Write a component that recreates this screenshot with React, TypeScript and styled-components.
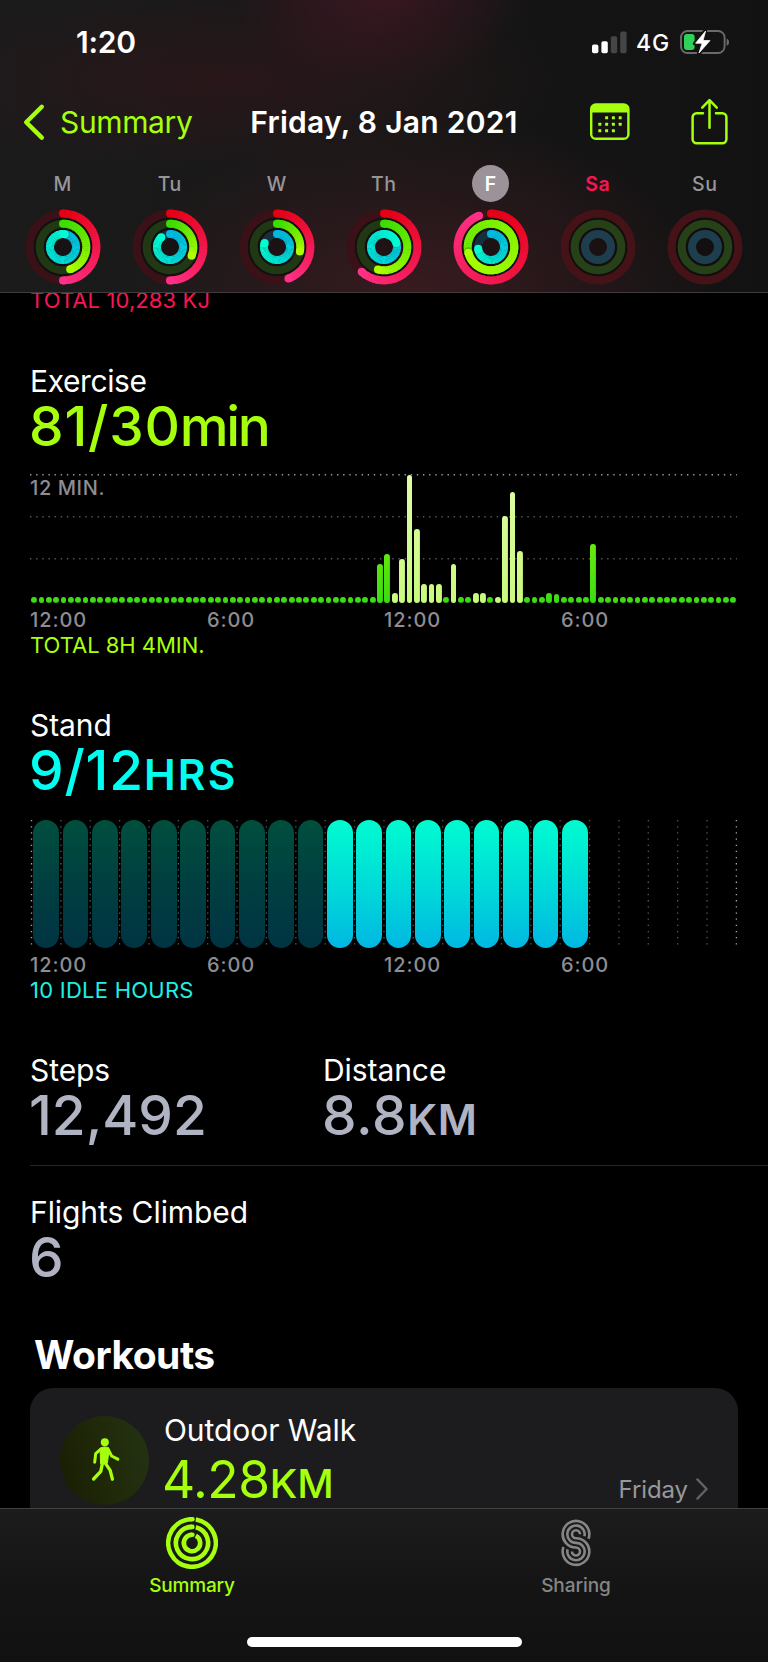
import React from "react";
import styled, { createGlobalStyle } from "styled-components";

const GlobalStyle = createGlobalStyle`
  *, *::before, *::after { box-sizing: border-box; }
  body {
    margin: 0;
    background: #000;
    font-family: Inter, "Liberation Sans", sans-serif;
    color: #fff;
  }
`;

const LIME = "#a6ff0d";
const AQUA = "#00fff0";
const SILVER = "#b0b3c2";
const PINK = "#fa1455";

/* ---------- shell ---------- */

const Screen = styled.div`
  width: 768px;
  height: 1662px;
  display: flex;
  flex-direction: column;
  overflow: hidden;
  background: #000;
`;

const Header = styled.header`
  flex: none;
  height: 293px;
  border-bottom: 1px solid #413b3d;
  background:
    radial-gradient(ellipse 150px 110px at 380px -20px, rgba(70, 22, 37, 0.8), transparent),
    radial-gradient(ellipse 300px 170px at 420px 290px, rgba(66, 28, 34, 0.75), transparent),
    radial-gradient(ellipse 330px 90px at 230px 80px, rgba(50, 22, 27, 0.65), transparent),
    linear-gradient(90deg, #1b1b1b, #171616 55%, #121212);
`;

const StatusBar = styled.div`
  height: 84px;
  display: flex;
  align-items: center;
  padding: 0 38px 0 76px;
`;

const Clock = styled.div`
  font-size: 30px;
  font-weight: 600;
  letter-spacing: -0.2px;
  margin-right: auto;
`;

const Network = styled.div`
  font-size: 23px;
  font-weight: 500;
  letter-spacing: 0.8px;
  margin: 2px 10px 0 9px;
`;

const NavBar = styled.nav`
  height: 76px;
  display: grid;
  grid-template-columns: 1fr auto 1fr;
  align-items: center;
  padding: 0 40px 0 22px;
`;

const BackLink = styled.div`
  display: flex;
  align-items: center;
  gap: 14px;
  color: ${LIME};
  font-size: 30px;
  letter-spacing: -0.36px;
`;

const Title = styled.h1`
  margin: 0 0 0 18px;
  font-size: 30px;
  line-height: 36px;
  font-weight: 600;
  letter-spacing: 0.27px;
`;

const NavActions = styled.div`
  display: flex;
  align-items: center;
  justify-content: flex-end;
  gap: 61px;
`;

const Week = styled.div`
  display: grid;
  grid-template-columns: repeat(7, 107px);
  padding-left: 9px;
`;

const Day = styled.div`
  display: flex;
  flex-direction: column;
  align-items: center;
`;

const DayName = styled.div<{ $tone?: "selected" | "today" }>`
  width: 37px;
  height: 37px;
  margin: 5px 0 5px;
  border-radius: 50%;
  display: flex;
  align-items: center;
  justify-content: center;
  font-size: 19.5px;
  font-weight: ${(p) => (p.$tone ? 600 : 500)};
  letter-spacing: 0.6px;
  text-indent: 0.6px;
  color: ${(p) => (p.$tone === "selected" ? "#fff" : p.$tone === "today" ? PINK : "#97959a")};
  background: ${(p) => (p.$tone === "selected" ? "#9b9399" : "transparent")};
`;

/* ---------- content ---------- */

const Content = styled.main`
  flex: 1;
  min-height: 0;
  overflow: hidden;
  padding-left: 30px;
`;

const Section = styled.section<{ $gap?: number }>`
  margin-top: ${(p) => p.$gap ?? 50}px;
`;

const Label = styled.div<{ $tracking?: number }>`
  height: 36px;
  line-height: 36px;
  font-size: 30px;
  letter-spacing: ${(p) => p.$tracking ?? -0.07}px;
`;

const Value = styled.div<{ $color: string; $tracking?: number }>`
  height: 54px;
  line-height: 54px;
  margin-left: -1px;
  font-size: 55px;
  font-weight: 500;
  letter-spacing: ${(p) => p.$tracking ?? 0.8}px;
  color: ${(p) => p.$color};
  white-space: nowrap;
`;

const SmallCapsUnit = styled.span<{ $tracking: number }>`
  font-size: 42.5px;
  font-weight: 600;
  letter-spacing: ${(p) => p.$tracking}px;
`;

const PlainUnit = styled.span`
  margin-left: -1px;
  letter-spacing: -2.4px;
`;

const Footnote = styled.div<{ $color: string; $tracking?: number }>`
  height: 24px;
  line-height: 24px;
  margin-top: 1px;
  font-size: 22px;
  letter-spacing: ${(p) => p.$tracking ?? 0.1}px;
  color: ${(p) => p.$color};
`;

const ClippedTotal = styled(Footnote)`
  margin-top: -5px;
`;

const Axis = styled.div`
  display: grid;
  grid-template-columns: repeat(4, 177px);
  height: 24px;
  margin-top: 5px;
  line-height: 24px;
  font-size: 20px;
  font-weight: 500;
  letter-spacing: 0.9px;
  color: #8e8d92;
`;

const MinuteChart = styled.div`
  position: relative;
  width: 706px;
  height: 129px;
  margin-top: 21px;
`;

const Grid = styled.svg`
  position: absolute;
  inset: 0;
  display: block;
  overflow: visible;
`;

const ScaleLabel = styled.div`
  position: absolute;
  top: 2px;
  left: 0;
  line-height: 24px;
  font-size: 20px;
  font-weight: 500;
  letter-spacing: 0.6px;
  color: #8e8d92;
`;

const Minutes = styled.div`
  position: relative;
  height: 100%;
  display: grid;
  grid-template-columns: repeat(96, 7.365px);
  align-items: end;
  justify-items: center;
  padding-left: 0.4px;
`;

const Minute = styled.div<{ $h: number; $workout: boolean }>`
  width: 5.8px;
  height: ${(p) => p.$h}px;
  border-radius: 2.9px;
  background: ${(p) =>
    p.$workout
      ? "linear-gradient(to top, #c8fa7c, #dffca8) bottom / 100% 128px"
      : "linear-gradient(to top, #38dc14, #a4f800) bottom / 100% 128px"};
`;

const HourChart = styled.div`
  position: relative;
  width: 708px;
  height: 128px;
  margin-top: 23px;
`;

const Hours = styled.div`
  position: relative;
  height: 100%;
  display: grid;
  grid-template-columns: repeat(24, 25.7px);
  column-gap: 3.68px;
  padding-left: 3.4px;
`;

const Hour = styled.div<{ $stood: boolean }>`
  border-radius: 13px;
  background: ${(p) =>
    p.$stood
      ? "linear-gradient(#00fcd0, #00dcd8 50%, #00b8e2)"
      : "linear-gradient(#004f3e, #003f40 50%, #003443)"};
`;

const StatsRow = styled.div`
  display: grid;
  grid-template-columns: 293px 1fr;
  padding-bottom: 23px;
  border-bottom: 1px solid #262628;
`;

const Heading = styled.h2`
  height: 46px;
  line-height: 46px;
  margin: 48px 0 10px 4px;
  font-size: 39px;
  font-weight: 700;
  letter-spacing: -0.5px;
`;

const WorkoutCard = styled.article`
  display: flex;
  width: 708px;
  height: 160px;
  padding: 24px 30px;
  border-radius: 23px;
  background: #1c1c1e;
`;

const WorkoutBadge = styled.div`
  flex: none;
  width: 89px;
  height: 89px;
  margin: 4px 15px 0 0;
  border-radius: 50%;
  background: linear-gradient(75deg, #191d02, #20290a 50%, #243414);
`;

const WorkoutText = styled.div`
  flex: 1;
`;

const WorkoutDistance = styled.div`
  height: 62px;
  line-height: 62px;
  margin-left: -2px;
  font-size: 51.5px;
  letter-spacing: -0.5px;
  color: ${LIME};
`;

const WorkoutUnit = styled.span`
  font-size: 40px;
  font-weight: 500;
  letter-spacing: 0.2px;
`;

const WorkoutDay = styled.div`
  display: flex;
  align-items: center;
  gap: 8px;
  height: 30px;
  margin-top: 62px;
  font-size: 24px;
  letter-spacing: -0.1px;
  color: #98979d;
`;

/* ---------- tab bar ---------- */

const TabBar = styled.footer`
  flex: none;
  height: 154px;
  border-top: 1px solid #414143;
  background: linear-gradient(#1c1c1c, #141414 55%, #111);
`;

const Tabs = styled.div`
  display: grid;
  grid-template-columns: 1fr 1fr;
  height: 128px;
`;

const Tab = styled.div<{ $active?: boolean }>`
  display: flex;
  flex-direction: column;
  align-items: center;
  padding-top: 8px;
  line-height: 22px;
  font-size: 19px;
  font-weight: 500;
  letter-spacing: ${(p) => (p.$active ? "-0.2px" : "-0.05px")};
  color: ${(p) => (p.$active ? LIME : "#868686")};
  svg { margin-bottom: 6px; }
`;

const HomeIndicator = styled.div`
  width: 275px;
  height: 10px;
  margin: 0 auto;
  border-radius: 5px;
  background: #fff;
`;

/* ---------- drawings ---------- */

const SignalIcon = () => (
  <svg width="35" height="23" viewBox="0 0 35 23">
    <rect x="0" y="13.6" width="6.4" height="8.6" rx="1.8" fill="#fff" />
    <rect x="9.4" y="10.3" width="6.4" height="11.9" rx="1.8" fill="#fff" />
    <rect x="18.8" y="5.3" width="6.4" height="16.9" rx="1.8" fill="#454545" />
    <rect x="28.2" y="0.4" width="6.4" height="21.8" rx="1.8" fill="#454545" />
  </svg>
);

const BatteryIcon = () => (
  <svg width="50" height="26" viewBox="0 0 50 26">
    <rect x="1" y="2" width="43.6" height="22" rx="6.5" fill="none" stroke="#6a6a6a" strokeWidth="1.9" />
    <path d="M46.6 9.6c1.7.7 2.4 2 2.4 3.6s-.7 2.9-2.4 3.6z" fill="#6a6a6a" />
    <rect x="4" y="5" width="10.6" height="16" rx="3" fill="#30d158" />
    <path d="M25.6 1 14.6 14.6h7L18.3 25.4 31 11.2h-7.4z" fill="#fff" stroke="#131313" strokeWidth="3.4" strokeLinejoin="round" />
    <path d="M25.6 2 15.6 14.2h6.6L19 24 30 11.6h-7z" fill="#fff" stroke="#fff" strokeWidth="0.8" strokeLinejoin="round" />
  </svg>
);

const BackIcon = () => (
  <svg width="24" height="38" viewBox="0 0 24 38">
    <path d="M19.8 3.8 4.2 19.2l15.6 15.4" fill="none" stroke={LIME} strokeWidth="4.4" strokeLinecap="round" strokeLinejoin="round" />
  </svg>
);

const CALENDAR_DOTS = [[1, 0], [2, 0], [3, 0], [0, 1], [1, 1], [2, 1], [3, 1], [0, 2], [1, 2], [2, 2]];

const CalendarIcon = () => (
  <svg width="40" height="38" viewBox="0 0 40 38">
    <rect x="1.2" y="1.4" width="37.2" height="34.4" rx="4.6" fill="none" stroke={LIME} strokeWidth="2.4" />
    <path d="M1 9.4V5.6A4.6 4.6 0 0 1 5.6 1H34a4.6 4.6 0 0 1 4.6 4.6v3.8z" fill={LIME} />
    {CALENDAR_DOTS.map(([c, r]) => (
      <rect key={`${c}${r}`} x={8.3 + c * 6.8} y={13.3 + r * 6.5} width="3" height="3" rx="0.5" fill={LIME} />
    ))}
  </svg>
);

const ShareIcon = () => (
  <svg width="37" height="48" viewBox="0 0 37 48">
    <g fill="none" stroke={LIME} strokeWidth="2.5" strokeLinecap="round" strokeLinejoin="round">
      <path d="M12 15.3H5.6a4 4 0 0 0-4 4v21.9a4 4 0 0 0 4 4h25.8a4 4 0 0 0 4-4V19.3a4 4 0 0 0-4-4H25" />
      <path d="M18.5 29.8V2.6M11.2 9.6l7.3-7.4 7.3 7.4" />
    </g>
  </svg>
);

type Rgb = [number, number, number];
const RING_SPECS: { r: number; from: Rgb; to: Rgb; track: string; idle: string }[] = [
  { r: 33.4, from: [228, 0, 20], to: [255, 48, 135], track: "#3a1117", idle: "#451217" },
  { r: 23.3, from: [60, 222, 0], to: [172, 255, 0], track: "#203813", idle: "#264018" },
  { r: 13, from: [0, 184, 224], to: [0, 255, 208], track: "#14303f", idle: "#1e3e4e" },
];

const mix = (a: Rgb, b: Rgb, t: number) =>
  `rgb(${a.map((v, i) => Math.round(v + (b[i] - v) * t)).join(",")})`;

const polar = (r: number, deg: number) => {
  const a = ((deg - 90) * Math.PI) / 180;
  return [40 + r * Math.cos(a), 40 + r * Math.sin(a)];
};

const RingArc = ({ r, from, to, sweep }: { r: number; from: Rgb; to: Rgb; sweep: number }) => {
  const steps = Math.ceil(sweep / 5);
  const [sx, sy] = polar(r, 0);
  const [ex, ey] = polar(r, sweep);
  const [hx, hy] = polar(r, sweep + 3);
  return (
    <g>
      <circle cx={sx} cy={sy} r="4" fill={mix(from, to, 0)} />
      {Array.from({ length: steps }, (_, i) => {
        const a = (sweep * i) / steps;
        const b = Math.min(sweep, (sweep * (i + 1)) / steps + 1);
        const [x1, y1] = polar(r, a);
        const [x2, y2] = polar(r, b);
        return (
          <path key={i} d={`M${x1} ${y1}A${r} ${r} 0 0 1 ${x2} ${y2}`} fill="none" stroke={mix(from, to, i / steps)} strokeWidth="8" />
        );
      })}
      {sweep > 360 && <circle cx={hx} cy={hy} r="4" fill="rgba(0,0,0,0.25)" />}
      <circle cx={ex} cy={ey} r="4" fill={mix(from, to, 1)} />
    </g>
  );
};

const Rings = ({ sweeps }: { sweeps?: number[] }) => (
  <svg width="80" height="80" viewBox="0 0 80 80">
    <circle cx="40" cy="40" r="23" fill="none" stroke="#110c0e" strokeOpacity="0.8" strokeWidth="12.6" />
    <circle cx="40" cy="40" r="17.5" fill="#110c0e" fillOpacity="0.5" />
    {RING_SPECS.map((s, i) => (
      <g key={s.r}>
        <circle cx="40" cy="40" r={s.r} fill="none" stroke={sweeps ? s.track : s.idle} strokeWidth="8" />
        {sweeps && <RingArc r={s.r} from={s.from} to={s.to} sweep={sweeps[i]} />}
      </g>
    ))}
  </svg>
);

const WalkIcon = () => (
  <svg width="89" height="89" viewBox="0 0 89 89">
    <circle cx="44.8" cy="26.3" r="4" fill={LIME} />
    <path d="M41.2 31.6q3.6-1.4 7.2 0l.6 3-1.6 12.6-6.8.6-.4-12z" fill={LIME} stroke={LIME} strokeWidth="1" strokeLinejoin="round" />
    <g fill="none" stroke={LIME} strokeWidth="3" strokeLinecap="round" strokeLinejoin="round">
      <path d="M41 32.8l-5.3 4.8-1 8.6" />
      <path d="M48 33l3.6 7 6.2 3.2" />
      <path d="M42.4 47.4l-1.6 8-7.2 7.6" strokeWidth="3.3" />
      <path d="M45.4 47.4l4.8 7 2.2 8.8" strokeWidth="3.3" />
    </g>
  </svg>
);

const ActivityTabIcon = () => (
  <svg width="52" height="52" viewBox="0 0 52 52">
    {[23.8, 16.1, 8.2].map((r) => (
      <g key={r} fill="none" stroke={LIME} strokeWidth="4.6">
        <path d={`M29.8 ${26 - Math.sqrt(r * r - 14.44)}A${r} ${r} 0 1 1 26 ${26 - r}`} />
        <path d={`M25.8 ${26 - r}h.6`} strokeLinecap="round" />
      </g>
    ))}
  </svg>
);

const S_LINES = [
  { a: 13.33, b: 4, up: 20, down: 0 },
  { a: 8.67, b: 8.67, up: 14, down: 14 },
  { a: 4, b: 13.33, up: 0, down: 20 },
];

const SharingTabIcon = () => (
  <svg width="30" height="52" viewBox="0 0 30 52">
    {S_LINES.map(({ a, b, up, down }) => {
      const u = (up * Math.PI) / 180;
      const d = (down * Math.PI) / 180;
      const top = 17.2;
      const low = 34.5;
      return (
        <path
          key={a}
          fill="none"
          stroke="#868686"
          strokeWidth="2.6"
          d={`M${15 + a * Math.cos(u)} ${top + a * Math.sin(u)}A${a} ${a} 0 1 0 15 ${top + a}A${b} ${b} 0 1 1 ${15 - b * Math.cos(d)} ${low - b * Math.sin(d)}`}
        />
      );
    })}
  </svg>
);

const ChevronRight = () => (
  <svg width="12" height="22" viewBox="0 0 12 22">
    <path d="M1.4 1.4 10.6 11l-9.2 9.6" fill="none" stroke="#626267" strokeWidth="2.3" strokeLinecap="round" strokeLinejoin="round" />
  </svg>
);

/* ---------- data ---------- */

const DAYS: { name: string; tone?: "selected" | "today"; sweeps?: number[] }[] = [
  { name: "M", sweeps: [180, 162, 368] },
  { name: "Tu", sweeps: [180, 112, 318] },
  { name: "W", sweeps: [160, 101, 288] },
  { name: "Th", sweeps: [222, 195, 433] },
  { name: "F", tone: "selected", sweeps: [339, 616, 262] },
  { name: "Sa", tone: "today" },
  { name: "Su" },
];

const ACTIVE: Record<number, number> = {
  47: 39.5, 48: 49, 49: 10, 50: 44.5, 51: 128, 52: 74.5, 53: 19.5, 54: 19.5, 55: 19.5, 57: 39.5,
  60: 10, 61: 10, 63: 6, 64: 87.5, 65: 111.5, 66: 52.5, 70: 10, 71: 9, 76: 59,
};
const WORKOUT = new Set([49, 50, 51, 52, 53, 54, 55, 57, 60, 61, 63, 64, 65, 66]);
const TIMES = ["12:00", "6:00", "12:00", "6:00"];

const TimeAxis = () => (
  <Axis>
    {TIMES.map((t, i) => (
      <span key={i}>{t}</span>
    ))}
  </Axis>
);

export default function App() {
  return (
    <Screen>
      <GlobalStyle />
      <Header>
        <StatusBar>
          <Clock>1:20</Clock>
          <SignalIcon />
          <Network>4G</Network>
          <BatteryIcon />
        </StatusBar>
        <NavBar>
          <BackLink>
            <BackIcon />
            Summary
          </BackLink>
          <Title>Friday, 8 Jan 2021</Title>
          <NavActions>
            <CalendarIcon />
            <ShareIcon />
          </NavActions>
        </NavBar>
        <Week>
          {DAYS.map((d) => (
            <Day key={d.name}>
              <DayName $tone={d.tone}>{d.name}</DayName>
              <Rings sweeps={d.sweeps} />
            </Day>
          ))}
        </Week>
      </Header>

      <Content>
        <ClippedTotal $color={PINK}>TOTAL 10,283 KJ</ClippedTotal>

        <Section $gap={51}>
          <Label $tracking={-0.4}>Exercise</Label>
          <Value $color={LIME}>
            81/30<PlainUnit>min</PlainUnit>
          </Value>
          <MinuteChart>
            <Grid width="708" height="129">
              {[0.7, 42.7, 84.8].map((y, i) => (
                <line key={y} x1="0" x2="707" y1={y} y2={y} stroke={i ? "#57575a" : "#98989c"} strokeWidth="1.4" strokeDasharray="1.4 4.74" />
              ))}
            </Grid>
            <ScaleLabel>12 MIN.</ScaleLabel>
            <Minutes>
              {Array.from({ length: 96 }, (_, i) => (
                <Minute key={i} $h={ACTIVE[i] ?? 5.8} $workout={WORKOUT.has(i)} />
              ))}
            </Minutes>
          </MinuteChart>
          <TimeAxis />
          <Footnote $color={LIME} $tracking={-0.02}>TOTAL 8H 4MIN.</Footnote>
        </Section>

        <Section>
          <Label>Stand</Label>
          <Value $color={AQUA}>
            9/12<SmallCapsUnit $tracking={2.2}>HRS</SmallCapsUnit>
          </Value>
          <HourChart>
            <Grid width="708" height="128">
              {Array.from({ length: 25 }, (_, i) => (
                <line
                  key={i}
                  x1={1.5 + i * 29.37}
                  x2={1.5 + i * 29.37}
                  y1="0"
                  y2="126"
                  stroke={i === 0 || i === 24 ? "#a8a8ac" : "#5c5c60"}
                  strokeWidth="1.3"
                  strokeDasharray="1.3 4.86"
                />
              ))}
            </Grid>
            <Hours>
              {Array.from({ length: 19 }, (_, i) => (
                <Hour key={i} $stood={i >= 10} />
              ))}
            </Hours>
          </HourChart>
          <TimeAxis />
          <Footnote $color="#1ff0e4" $tracking={0.25}>10 IDLE HOURS</Footnote>
        </Section>

        <Section>
          <StatsRow>
            <div>
              <Label>Steps</Label>
              <Value $color={SILVER} $tracking={-0.03}>12,492</Value>
            </div>
            <div>
              <Label>Distance</Label>
              <Value $color={SILVER} $tracking={0.6}>
                8.8<SmallCapsUnit $tracking={0.6}>KM</SmallCapsUnit>
              </Value>
            </div>
          </StatsRow>
        </Section>

        <Section $gap={28}>
          <Label>Flights Climbed</Label>
          <Value $color={SILVER}>6</Value>
        </Section>

        <Heading>Workouts</Heading>
        <WorkoutCard>
          <WorkoutBadge>
            <WalkIcon />
          </WorkoutBadge>
          <WorkoutText>
            <Label>Outdoor Walk</Label>
            <WorkoutDistance>
              4.28<WorkoutUnit>KM</WorkoutUnit>
            </WorkoutDistance>
          </WorkoutText>
          <WorkoutDay>
            Friday
            <ChevronRight />
          </WorkoutDay>
        </WorkoutCard>
      </Content>

      <TabBar>
        <Tabs>
          <Tab $active>
            <ActivityTabIcon />
            Summary
          </Tab>
          <Tab>
            <SharingTabIcon />
            Sharing
          </Tab>
        </Tabs>
        <HomeIndicator />
      </TabBar>
    </Screen>
  );
}
